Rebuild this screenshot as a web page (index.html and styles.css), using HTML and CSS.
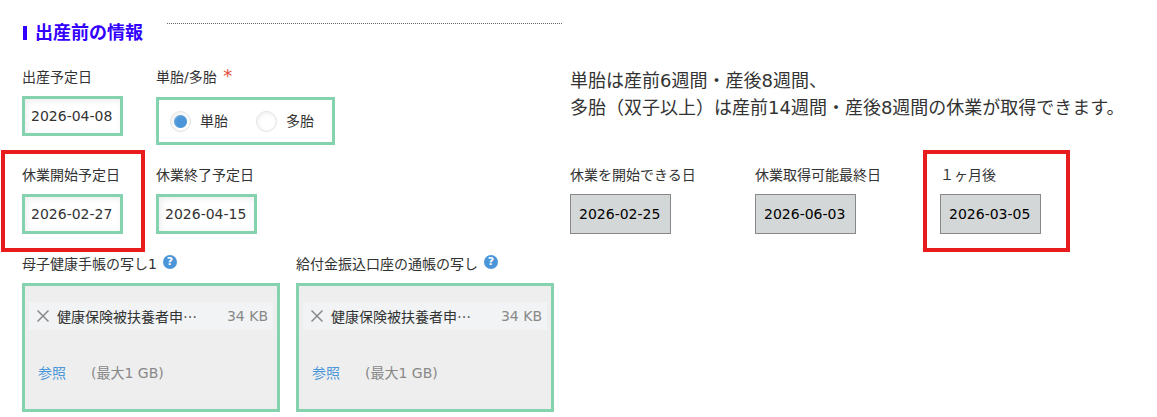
FILE: index.html
```html
<!DOCTYPE html>
<html lang="ja">

<head>
    <meta charset="UTF-8">
    <meta name="viewport" content="width=device-width, initial-scale=1.0">
    <title>出産前の情報</title>
    <link rel="stylesheet" href="styles.css">
</head>

<body>
    <form class="form">
        <div class="heading">
            <h2>出産前の情報</h2>
            <hr>
        </div>

        <div class="row">
            <div class="left">
                <div class="field">
                    <label class="label" for="due-date">出産予定日</label>
                    <input class="date" type="text" id="due-date" value="2026-04-08">
                </div>
                <fieldset class="field">
                    <legend class="label">単胎/多胎 <span class="required">*</span></legend>
                    <div class="radio-box">
                        <label><input type="radio" name="birth" checked>単胎</label>
                        <label><input type="radio" name="birth">多胎</label>
                    </div>
                </fieldset>
            </div>
            <p class="note">単胎は産前6週間・産後8週間、<br>多胎（双子以上）は産前14週間・産後8週間の休業が取得できます。</p>
        </div>

        <div class="row">
            <div class="left">
                <div class="field marked">
                    <label class="label" for="leave-start">休業開始予定日</label>
                    <input class="date" type="text" id="leave-start" value="2026-02-27">
                </div>
                <div class="field">
                    <label class="label" for="leave-end">休業終了予定日</label>
                    <input class="date" type="text" id="leave-end" value="2026-04-15">
                </div>
            </div>
            <div class="right">
                <div class="field">
                    <label class="label" for="first-day">休業を開始できる日</label>
                    <input class="date" type="text" id="first-day" value="2026-02-25" disabled>
                </div>
                <div class="field">
                    <label class="label" for="last-day">休業取得可能最終日</label>
                    <input class="date" type="text" id="last-day" value="2026-06-03" disabled>
                </div>
                <div class="field marked marked-wide">
                    <label class="label" for="month-later">１ヶ月後</label>
                    <input class="date" type="text" id="month-later" value="2026-03-05" disabled>
                </div>
            </div>
        </div>

        <div class="row">
            <div class="left">
                <div class="file-field">
                    <div class="file-label">
                        <label class="label" for="file1">母子健康手帳の写し1</label>
                        <button class="help" type="button">?</button>
                    </div>
                    <div class="file-box">
                        <div class="file">
                            <button class="remove" type="button" aria-label="削除">
                                <svg width="12" height="12" viewBox="0 0 12 12"><path d="M.5.5l11 11M11.5.5l-11 11" /></svg>
                            </button>
                            <span class="file-name">健康保険被扶養者申…</span>
                            <span class="file-size">34 KB</span>
                        </div>
                        <div class="browse">
                            <label>参照<input type="file" id="file1"></label>
                            <span>(最大1 GB)</span>
                        </div>
                    </div>
                </div>
                <div class="file-field">
                    <div class="file-label">
                        <label class="label" for="file2">給付金振込口座の通帳の写し</label>
                        <button class="help" type="button">?</button>
                    </div>
                    <div class="file-box">
                        <div class="file">
                            <button class="remove" type="button" aria-label="削除">
                                <svg width="12" height="12" viewBox="0 0 12 12"><path d="M.5.5l11 11M11.5.5l-11 11" /></svg>
                            </button>
                            <span class="file-name">健康保険被扶養者申…</span>
                            <span class="file-size">34 KB</span>
                        </div>
                        <div class="browse">
                            <label>参照<input type="file" id="file2"></label>
                            <span>(最大1 GB)</span>
                        </div>
                    </div>
                </div>
            </div>
        </div>
    </form>
</body>

</html>
```

FILE: styles.css
```css
* {
  margin: 0;
  padding: 0;
  box-sizing: border-box;
}

body {
  background-color: #fff;
  color: #333;
  font-family: "DejaVu Sans", "Noto Sans CJK JP", sans-serif;
  font-size: 14px;
  line-height: 20px;
}

input,
button {
  font: inherit;
}

.form {
  display: flex;
  flex-direction: column;
  gap: 20px;
  padding: 19px 22px 5px;
}

/* heading */
.heading {
  display: flex;
  gap: 24px;
  max-width: 540px;
  height: 28px;
}

.heading h2 {
  display: flex;
  align-items: center;
  gap: 8px;
  color: #3300ff;
  font-size: 18px;
  line-height: 28px;
  white-space: nowrap;
}

.heading h2::before {
  content: "";
  width: 4px;
  height: 14px;
  margin-left: 1px;
  background-color: #3300ff;
}

.heading hr {
  flex: 1;
  height: 1px;
  margin-top: 4px;
  border: none;
  border-top: 1px dotted #666;
}

/* rows and fields */
.row {
  display: grid;
  grid-template-columns: minmax(0, 532px) 1fr;
  gap: 16px;
}

.left,
.right {
  display: flex;
  gap: 16px;
}

.field {
  position: relative;
  min-width: 118px;
  border: none;
}

.right .field {
  min-width: 169px;
}

.label {
  display: block;
  margin-bottom: 9px;
  white-space: nowrap;
}

.required {
  margin-left: 2px;
  color: #e74c3c;
  font-size: 18px;
  line-height: 18px;
}

.date {
  display: block;
  width: 101px;
  height: 40px;
  padding: 0 6px;
  border: 3px solid #85d2ae;
  background-color: #fff;
  box-shadow: inset 2px 2px 6px #eee;
  color: #333;
}

.date:disabled {
  padding: 0 8px;
  border: 1px solid #888;
  background-color: #d4d7d7;
  box-shadow: none;
  color: #000;
}

.note {
  font-size: 18px;
  line-height: 27px;
}

/* red frame over a field */
.marked::after {
  content: "";
  position: absolute;
  inset: -15px -5px -18px -21px;
  border: 4px solid #e81c1c;
  pointer-events: none;
}

.marked-wide::after {
  left: -17px;
  right: 39px;
}

/* radio buttons */
.radio-box {
  display: flex;
  align-items: center;
  gap: 28px;
  height: 48px;
  margin-top: 10px;
  padding: 0 18px 0 11px;
  border: 3px solid #85d2ae;
}

legend.label {
  margin-bottom: 0;
}

.radio-box label {
  display: flex;
  align-items: center;
  gap: 9px;
}

.radio-box input {
  appearance: none;
  width: 21px;
  height: 21px;
  border: 1px solid #e0e3e3;
  border-radius: 50%;
  background-color: #fff;
  box-shadow: inset 1px 1px 4px #eee;
}

.radio-box input:checked {
  background-image: radial-gradient(circle, #4b96d8 6px, transparent 7px);
}

/* attachments */
.file-field {
  flex: 1;
}

.file-label {
  display: flex;
  gap: 6px;
}

.help {
  width: 14px;
  height: 14px;
  margin-top: 1px;
  border: none;
  border-radius: 50%;
  background-color: #4b96d8;
  color: #fff;
  font-size: 11px;
  font-weight: bold;
  line-height: 14px;
}

.file-box {
  padding: 16px 4px 26px;
  border: 3px solid #85d2ae;
  background-color: #eee;
}

.file {
  display: flex;
  align-items: center;
  gap: 8px;
  height: 28px;
  margin-bottom: 33px;
  padding: 0 5px 0 8px;
  background-color: #f1f3f5;
}

.remove {
  display: flex;
  border: none;
  background: none;
}

.remove svg {
  stroke: #888;
  stroke-width: 1.5;
}

.file-name {
  flex: 1;
  font-family: "Noto Sans CJK JP", sans-serif;
  white-space: nowrap;
}

.file-size,
.browse {
  color: #888;
}

.browse {
  display: flex;
  gap: 25px;
  padding-left: 9px;
}

.browse label {
  color: #4b96d8;
  cursor: pointer;
}

.browse input {
  position: absolute;
  width: 1px;
  height: 1px;
  opacity: 0;
}
```
